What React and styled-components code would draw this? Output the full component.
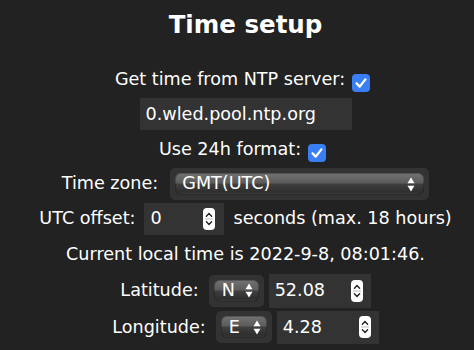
import styled, { createGlobalStyle } from "styled-components";

const GlobalStyle = createGlobalStyle`
  html, body {
    margin: 0;
    padding: 0;
    background: #222;
  }
  body {
    color: #fff;
    font-family: "DejaVu Sans", Verdana, sans-serif;
    font-size: 17.6px;
  }
`;

const Page = styled.div`
  width: 100%;
  height: 350px;
  padding-left: 17px;
  box-sizing: border-box;
  display: flex;
  flex-direction: column;
  align-items: center;
  overflow: hidden;
`;

const Title = styled.h2`
  margin: 0;
  height: 62.5px;
  padding-top: 10px;
  box-sizing: border-box;
  font-size: 24.5px;
  line-height: 29px;
  font-weight: bold;
`;

const Row = styled.div`
  display: flex;
  justify-content: center;
  align-items: center;
  height: ${(p) => p.$h}px;
  gap: ${(p) => p.$gap || 0}px;
  white-space: nowrap;
`;

const Label = styled.span`
  line-height: 1;
`;

const Check = styled.span`
  display: inline-flex;
  margin: 6px 6px 0 ${(p) => p.$ml || 7}px;
`;

const TextField = styled.input`
  width: 212px;
  height: 32px;
  box-sizing: border-box;
  padding: 0 6px;
  border: none;
  outline: none;
  background: #333;
  color: #fff;
  font-family: inherit;
  font-size: 17.6px;
`;

const SelectBox = styled.div`
  width: ${(p) => p.$w}px;
  padding: 5px;
  box-sizing: border-box;
  background: #333;
  border-radius: 5px;
`;

const SelectFace = styled.div`
  display: flex;
  align-items: center;
  justify-content: space-between;
  height: 22px;
  padding: 0 ${(p) => p.$pr || 7}px 0 ${(p) => p.$pl || 7}px;
  border-radius: 6px;
  background: linear-gradient(
    #737373 0%,
    #5c5c5c 44%,
    #3e3e3e 52%,
    #2f2f2f 85%,
    #3b3b3b 100%
  );
  box-shadow: inset 0 0 0 1px rgba(0, 0, 0, 0.25);
  line-height: 1;
`;

const NumberField = styled.div`
  display: flex;
  align-items: center;
  justify-content: space-between;
  width: ${(p) => p.$w}px;
  height: ${(p) => p.$h}px;
  padding: 0 ${(p) => p.$pr}px 0 6px;
  box-sizing: border-box;
  background: #333;
  line-height: 1;
`;

const Checkbox = ({ ml }) => (
  <Check $ml={ml}>
    <svg width="18" height="18" viewBox="0 0 18 18">
      <rect x="0" y="0" width="18" height="18" rx="4" fill="#3a7ef4" />
      <path
        d="M4.6 9.4 L7.7 12.6 L13.4 5.4"
        fill="none"
        stroke="#fff"
        strokeWidth="2.3"
        strokeLinecap="round"
        strokeLinejoin="round"
      />
    </svg>
  </Check>
);

const Arrows = () => (
  <svg width="8" height="17" viewBox="0 0 8 17">
    <polygon points="0.5,7.2 4,1.5 7.5,7.2" fill="#fff" />
    <polygon points="0.5,9.8 4,15.5 7.5,9.8" fill="#fff" />
  </svg>
);

const Spinner = () => (
  <svg width="12" height="22" viewBox="0 0 12 22">
    <rect x="0" y="0" width="12" height="22" rx="4" fill="#fff" />
    <line x1="2" y1="11" x2="10" y2="11" stroke="#bbb" strokeWidth="1" />
    <path
      d="M3.4 8.2 L6 5.6 L8.6 8.2"
      fill="none"
      stroke="#222"
      strokeWidth="1.4"
      strokeLinecap="round"
    />
    <path
      d="M3.4 13.8 L6 16.4 L8.6 13.8"
      fill="none"
      stroke="#222"
      strokeWidth="1.4"
      strokeLinecap="round"
    />
  </svg>
);

const Select = ({ w, value, pl, pr }) => (
  <SelectBox $w={w}>
    <SelectFace $pl={pl} $pr={pr}>
      <span>{value}</span>
      <Arrows />
    </SelectFace>
  </SelectBox>
);

const NumberInput = ({ w, h, pr, value }) => (
  <NumberField $w={w} $h={h} $pr={pr}>
    <span>{value}</span>
    <Spinner />
  </NumberField>
);

function App() {
  return (
    <>
      <GlobalStyle />
      <Page>
        <Title>Time setup</Title>
        <Row $h={34}>
          <Label>Get time from NTP server:</Label>
          <Checkbox />
        </Row>
        <Row $h={35.5}>
          <TextField defaultValue="0.wled.pool.ntp.org" />
        </Row>
        <Row $h={35}>
          <Label>Use 24h format:</Label>
          <Checkbox />
        </Row>
        <Row $h={34} $gap={12}>
          <Label>Time zone:</Label>
          <Select w={259} value="GMT(UTC)" pr={9} />
        </Row>
        <Row $h={36.5} $gap={9}>
          <Label>UTC offset:</Label>
          <NumberInput w={80} h={32} pr={9} value="0" />
          <Label>seconds (max. 18 hours)</Label>
        </Row>
        <Row $h={35.5}>
          <Label>Current local time is 2022-9-8, 08:01:46.</Label>
        </Row>
        <Row $h={35.75} $gap={5}>
          <Label style={{ marginRight: 5 }}>Latitude:</Label>
          <Select w={55} value="N" pl={8} pr={6} />
          <NumberInput w={102} h={34} pr={8} value="52.08" />
        </Row>
        <Row $h={37.25} $gap={5}>
          <Label style={{ marginRight: 5 }}>Longitude:</Label>
          <Select w={56} value="E" pl={8} pr={6} />
          <NumberInput w={102} h={33} pr={8} value="4.28" />
        </Row>
      </Page>
    </>
  );
}

export default App;
